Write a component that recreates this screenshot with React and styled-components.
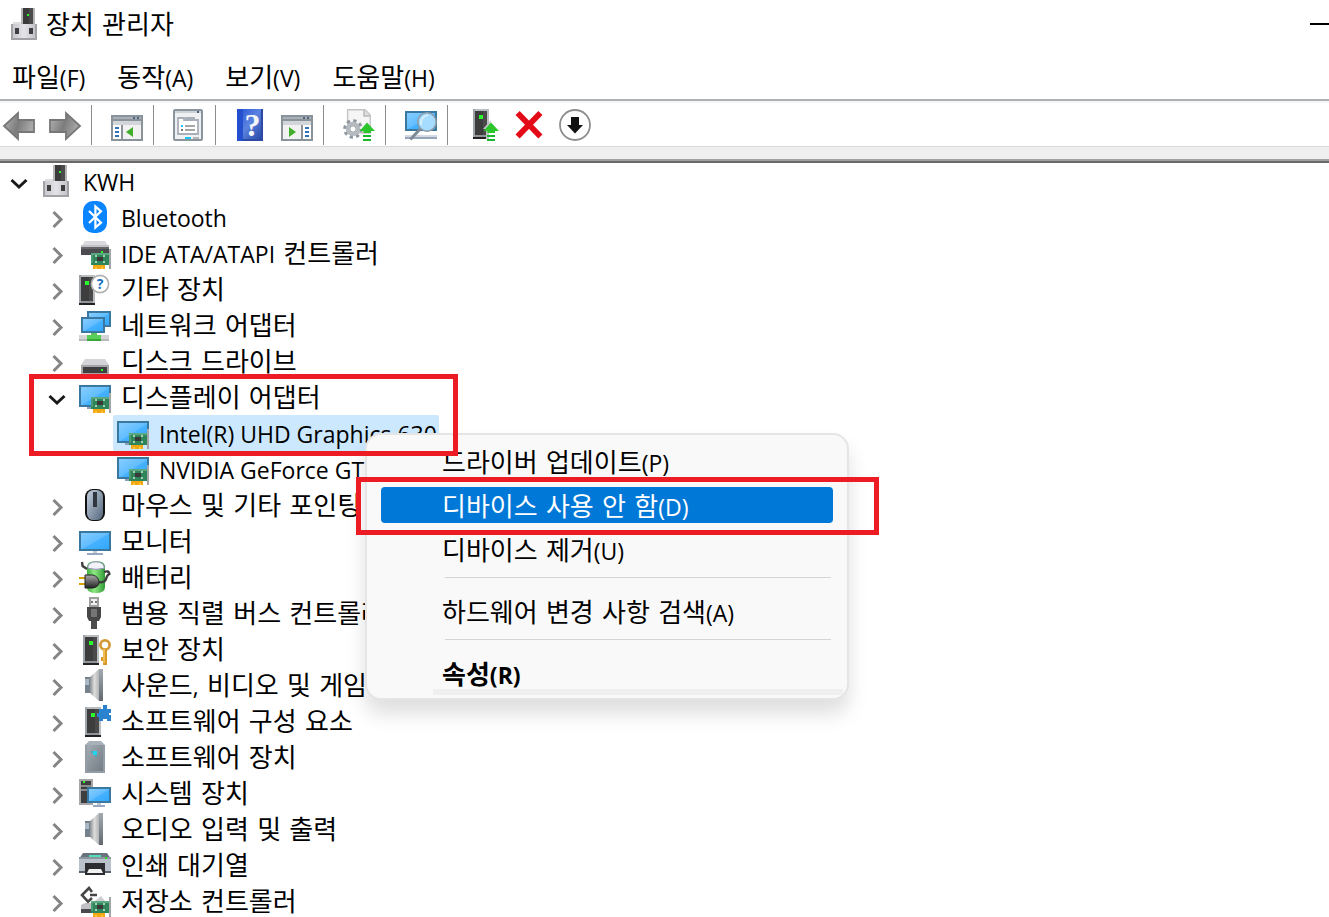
import React from "react";
import styled, { createGlobalStyle, css } from "styled-components";

const GlobalStyle = createGlobalStyle`
  * { box-sizing: border-box; }
  body {
    margin: 0;
    background: #fff;
    color: #000;
    font-family: "DejaVu Sans", "Noto Sans CJK KR", sans-serif;
    font-size: 26px;
    line-height: 36px;
  }
  button { font: inherit; color: inherit; background: none; border: 0; padding: 0; }
`;

/* ---------- window frame ---------- */

const Window = styled.div`
  display: flex;
  flex-direction: column;
  height: 100vh;
  overflow: hidden;
`;

const TitleBar = styled.header`
  display: flex;
  align-items: center;
  gap: 5px;
  height: 48px;
  padding-left: 9px;
  flex: none;
`;

const Title = styled.h1`
  margin: 0;
  padding-top: 2px;
  font-size: inherit;
  font-weight: 400;
  flex: 1;
`;

const Minimize = styled.button`
  width: 19px;
  height: 32px;
  display: flex;
  align-items: center;
  &::before {
    content: "";
    width: 100%;
    height: 2px;
    background: #000;
  }
`;

const MenuBar = styled.nav`
  display: flex;
  gap: 32px;
  height: 51px;
  padding: 9px 12px 0;
  align-items: center;
  flex: none;
  white-space: nowrap;
`;

const Latin = styled.span`
  font-family: "Open Sans", sans-serif;
  font-size: 23px;
`;

const ToolBar = styled.div`
  display: flex;
  align-items: flex-start;
  height: 48px;
  flex: none;
  border-top: 2px solid #b0b0b0;
  border-bottom: 1px solid #d9d9d9;
  box-shadow: inset 0 2px #f3f7fa;
  padding-top: 4px;
`;

const ToolGroup = styled.div`
  display: flex;
  align-items: center;
  gap: 14px;
  height: 40px;
  padding: 0 10px 0 ${(p) => (p.$first ? "3px" : "19px")};
  border-right: ${(p) => (p.$last ? "0" : "1px solid #8c8c8c")};
`;

const ToolButton = styled.button`
  display: flex;
  width: 32px;
  height: 32px;
`;

const Band = styled.div`
  height: 16px;
  flex: none;
  background: #efefef;
  border-bottom: 2px solid #696969;
  box-shadow: inset 0 -2px #a0a0a0;
`;

const Svg = styled.svg`
  width: 32px;
  height: 32px;
  flex: none;
  display: block;
  overflow: visible;
`;

/* ---------- tree ---------- */

const Content = styled.main`
  position: relative;
  flex: 1;
  min-height: 0;
`;

const Tree = styled.ul`
  list-style: none;
  margin: 0;
  padding: 0;
`;

const Row = styled.li`
  display: flex;
  align-items: center;
  height: 36px;
  padding-left: ${(p) => 3 + p.$level * 38}px;
`;

const Toggle = styled.button`
  width: 32px;
  height: 32px;
  margin-right: 2px;
  padding-top: 3px;
  display: flex;
  align-items: center;
  justify-content: center;
  color: ${(p) => (p.$open ? "#1a1a1a" : "#858585")};
`;

const ToggleSpace = styled.span`
  width: 34px;
`;

const Node = styled.span`
  display: flex;
  align-items: center;
  gap: 10px;
  height: 36px;
  padding: 0 2px 0 4px;
  border-radius: 2px;
  white-space: nowrap;
  background: ${(p) => (p.$selected ? "#cce8ff" : "transparent")};
`;

const Label = styled.span`
  padding-top: 2px;
`;

/* ---------- context menu ---------- */

const ContextMenu = styled.div`
  position: absolute;
  left: 365px;
  top: 270px;
  width: 484px;
  display: flex;
  flex-direction: column;
  gap: 8px;
  padding: 8px 14px 7px;
  border: 2px solid #e5e5e5;
  border-radius: 16px;
  background: #f9f9f9;
  box-shadow: 0 14px 20px rgba(0, 0, 0, 0.13);
  &::after {
    content: "";
    position: absolute;
    left: 66px;
    right: 4px;
    bottom: 3px;
    height: 6px;
    background: #efefef;
  }
`;

const MenuItem = styled.button`
  height: 36px;
  padding: 2px 0 0 61px;
  text-align: left;
  border-radius: 4px;
  font-weight: ${(p) => (p.$bold ? 700 : 400)};
  ${(p) =>
    p.$active &&
    css`
      background: #0078d7;
      color: #fff;
    `}
`;

const Divider = styled.hr`
  width: 386px;
  height: 1px;
  margin: 2px 2px 7px auto;
  border: 0;
  background: #d5d5d5;
`;

const Marker = styled.div`
  position: absolute;
  left: ${(p) => p.$x}px;
  top: ${(p) => p.$y}px;
  width: ${(p) => p.$w}px;
  height: ${(p) => p.$h}px;
  border: 5px solid #ed1c24;
  pointer-events: none;
`;

/* ---------- icons, drawn on a 16-unit grid ---------- */

const R = ({ x, y, w, h, f, ...rest }) => (
  <rect x={x} y={y} width={w} height={h} fill={f} {...rest} />
);

const Icon = ({ children }) => (
  <Svg viewBox="0 0 16 16" aria-hidden="true">
    {children}
  </Svg>
);

const Defs = styled.svg`
  position: absolute;
  width: 0;
  height: 0;
`;

const Gradients = () => (
  <Defs aria-hidden="true">
    <defs>
      <linearGradient id="screen" x1="0" y1="0" x2="1" y2="1">
        <stop offset="0" stopColor="#86cdff" />
        <stop offset="0.5" stopColor="#62bdff" />
        <stop offset="0.55" stopColor="#45b1ff" />
        <stop offset="1" stopColor="#33a8ff" />
      </linearGradient>
      <linearGradient id="metal" x1="0" y1="0" x2="1" y2="0">
        <stop offset="0" stopColor="#c9c9cd" />
        <stop offset="0.5" stopColor="#e4e4e8" />
        <stop offset="1" stopColor="#c4c4c8" />
      </linearGradient>
      <linearGradient id="cone" x1="0" y1="0" x2="1" y2="0">
        <stop offset="0" stopColor="#8b8f93" />
        <stop offset="0.5" stopColor="#dcdcdc" />
        <stop offset="1" stopColor="#b2b4b6" />
      </linearGradient>
      <linearGradient id="edge" x1="0" y1="0" x2="0" y2="1">
        <stop offset="0" stopColor="#a3abb2" />
        <stop offset="1" stopColor="#62686e" />
      </linearGradient>
      <linearGradient id="arrow" x1="0" y1="0" x2="1" y2="0.3">
        <stop offset="0" stopColor="#b5b5b5" />
        <stop offset="0.55" stopColor="#7c7c7c" />
        <stop offset="1" stopColor="#a9a9a9" />
      </linearGradient>
      <linearGradient id="mouse" x1="0" y1="0" x2="1" y2="1">
        <stop offset="0" stopColor="#c3d0de" />
        <stop offset="1" stopColor="#55677d" />
      </linearGradient>
      <linearGradient id="help" x1="0" y1="0" x2="1" y2="1">
        <stop offset="0" stopColor="#2351d6" />
        <stop offset="0.5" stopColor="#5b83e0" />
        <stop offset="1" stopColor="#2a49a8" />
      </linearGradient>
      <linearGradient id="case" x1="0" y1="0" x2="1" y2="1">
        <stop offset="0" stopColor="#a3abb3" />
        <stop offset="1" stopColor="#737c84" />
      </linearGradient>
      <linearGradient id="plug" x1="0" y1="0" x2="0" y2="1">
        <stop offset="0" stopColor="#aaa" />
        <stop offset="1" stopColor="#222" />
      </linearGradient>
      <linearGradient id="cell" x1="0" y1="0" x2="1" y2="0">
        <stop offset="0" stopColor="#3fae3f" />
        <stop offset="0.4" stopColor="#8ee882" />
        <stop offset="1" stopColor="#2f9a35" />
      </linearGradient>
    </defs>
  </Defs>
);

const Screen = ({ x, y, w, h }) => (
  <g>
    <R x={x} y={y} w={w} h={h} f="#3b789f" />
    <R x={x + 1} y={y + 1} w={w - 2} h={h - 2} f="url(#screen)" />
  </g>
);

const Card = () => (
  <g>
    <R x={15} y={6} w={1} h={10} f="#a5a5a8" />
    <R x={6} y={8} w={9} h={6} f="#2f855a" />
    <R x={6} y={8} w={9} h={1} f="#5aa880" />
    <R x={6} y={9} w={1} h={4} f="#4c9a72" />
    <R x={9} y={10} w={3} h={2} f="#3a3a3a" />
    <R x={8} y={9} w={1} h={1} f="#a9cdb8" />
    <R x={12} y={9} w={1} h={1} f="#a9cdb8" />
    <R x={8} y={12} w={1} h={1} f="#a9cdb8" />
    <R x={12} y={12} w={1} h={1} f="#a9cdb8" />
    <R x={7} y={14} w={6} h={2} f="#f3a712" />
    <R x={8} y={15} w={1} h={1} f="#ffc33c" />
    <R x={11} y={15} w={1} h={1} f="#ffc33c" />
  </g>
);

const Tower = ({ x = 0, y = 0 }) => (
  <g transform={`translate(${x} ${y})`}>
    <R x={0} y={0} w={8} h={14} f="#b9bdc0" />
    <R x={0} y={0} w={1} h={14} f="#9da3a8" />
    <R x={1} y={1} w={6} h={12} f="#3d3d3d" />
    <R x={5} y={1} w={2} h={12} f="#4a4a4a" />
    <R x={3} y={3} w={2} h={2} f="#2bff2b" />
    <R x={0} y={14} w={8} h={1} f="#222" />
    <R x={1} y={13} w={6} h={1} f="#909498" />
  </g>
);

const UpArrow = () => (
  <g>
    <path d="M12 6.800 16 11H14V12H10.200V11H8.300Z" fill="#2cc52c" />
    <R x={10} y={13} w={4} h={1} f="#17b82b" />
    <R x={10} y={15} w={4} h={1} f="#17b82b" />
  </g>
);

const Hub = () => (
  <Icon>
    <R x={6} y={0} w={7} h={8} f="#b4b6b8" />
    <R x={7} y={0} w={5} h={8} f="#3b3b3b" />
    <R x={10} y={0} w={2} h={8} f="#4b4b4b" />
    <R x={9} y={3} w={1} h={1} f="#2bff2b" />
    <R x={2} y={7} w={4} h={1} f="#dedee0" />
    <R x={1} y={8} w={13} h={8} f="#a2a2a6" />
    <R x={2} y={8} w={11} h={7} f="url(#metal)" />
    <R x={3} y={10} w={2} h={3} f="#3f3f3f" />
    <R x={10} y={10} w={2} h={3} f="#3f3f3f" />
  </Icon>
);

const Bluetooth = () => (
  <Icon>
    <rect x="2" width="12" height="16" rx="5" fill="#0a84ff" />
    <path d="M5 5 11 10.800 8.200 13.300V2.700L11 5.200 5 11" fill="none" stroke="#fff" strokeWidth="1.100" />
  </Icon>
);

const Ide = () => (
  <Icon>
    <path d="M3 2H13L15 5H1Z" fill="#d9d9de" />
    <R x={1} y={4} w={14} h={5} f="#c2c2c7" />
    <R x={1} y={5} w={14} h={4} f="#4c4c50" />
    <R x={1} y={5} w={14} h={1} f="#66666a" />
    <Card />
    <R x={11} y={7} w={1} h={1} f="#2bff2b" />
  </Icon>
);

const Unknown = () => (
  <Icon>
    <Tower x={0} y={1} />
    <circle cx="10.500" cy="5.500" r="4.300" fill="#fff" stroke="#b0b0b0" strokeWidth="0.800" />
    <text x="10.500" y="8" textAnchor="middle" fontFamily="Open Sans" fontSize="7" fontWeight="700" fill="#1a6fc0">?</text>
  </Icon>
);

const Network = () => (
  <Icon>
    <Screen x={4} y={1} w={12} h={8} />
    <Screen x={1} y={4} w={12} h={8} />
    <R x={0} y={13} w={15} h={2} f="#d3d5d6" />
    <R x={0} y={15} w={15} h={1} f="#b6babc" />
    <R x={6} y={12} w={3} h={1} f="#5fc45f" />
    <R x={4} y={13} w={7} h={2} f="#58cf58" />
    <R x={4} y={15} w={7} h={1} f="#35a835" />
  </Icon>
);

const Disk = () => (
  <Icon>
    <path d="M3 7H13L15 10V11H1V10Z" fill="#d4d4d8" />
    <R x={1} y={10} w={14} h={5} f="#a5a5a8" />
    <R x={2} y={11} w={12} h={3} f="#3f3f41" />
    <R x={11} y={12} w={1} h={1} f="#2bff2b" />
  </Icon>
);

const Display = () => (
  <Icon>
    <Screen x={0} y={2} w={16} h={11} />
    <R x={4} y={13} w={2} h={1} f="#8c9fb8" />
    <Card />
  </Icon>
);

const Mouse = () => (
  <Icon>
    <rect x="3" y="0" width="10" height="16" rx="4" fill="#111" />
    <rect x="4" y="0.500" width="8" height="15" rx="3.200" fill="url(#mouse)" />
    <path d="M7 1.500H9V9H7Z" fill="#30363e" />
  </Icon>
);

const Monitor = () => (
  <Icon>
    <Screen x={0} y={3} w={16} h={10} />
    <R x={7} y={13} w={2} h={1} f="#c3cad4" />
    <R x={4} y={14} w={8} h={1} f="#98a8c0" />
  </Icon>
);

const Battery = () => (
  <Icon>
    <path d="M4 3Q4 0 8.500 0T13 3V13Q13 16 8.500 16T4 13Z" fill="url(#cell)" />
    <path d="M4.300 3.600Q4.500 0.400 8.500 0.400T12.700 3.600Q8.500 4.800 4.300 3.600Z" fill="#f2f2fa" stroke="#8f8fae" strokeWidth="0.500" />
    <path d="M10 10.500Q13 11 13.500 9T15.200 6.500Q15 4.500 12.500 5.500M1.500 0.500 1.800 2.500 4 4" fill="none" stroke="#3e3e3e" strokeWidth="1.200" />
    <R x={0} y={8} w={3} h={1} f="#d6a400" />
    <R x={0} y={11} w={3} h={1} f="#d6a400" />
    <path d="M3 7H7Q10 8 10 10.500T7 13.500H3Z" fill="url(#plug)" stroke="#222" strokeWidth="0.500" />
  </Icon>
);

const Usb = () => (
  <Icon>
    <R x={5} y={0} w={5} h={5} f="#a0a0a0" />
    <R x={6} y={1} w={3} h={3} f="#f0f0f0" />
    <R x={6} y={2} w={1} h={1} f="#777" />
    <R x={8} y={2} w={1} h={1} f="#777" />
    <path d="M4 5H11V10L10 12H5L4 10Z" fill="#474747" />
    <R x={6} y={6} w={3} h={4} f="#757575" />
    <R x={6} y={12} w={3} h={4} f="#4b4b4b" />
  </Icon>
);

const Security = () => (
  <Icon>
    <Tower x={2} y={1} />
    <circle cx="13" cy="6" r="2.300" fill="#fff" stroke="#d39a35" strokeWidth="1.400" />
    <R x={12} y={8} w={2} h={8} f="#d99a2b" />
    <R x={12} y={8} w={1} h={7} f="#efbd55" />
    <R x={11} y={12} w={1} h={2} f="#d99a2b" />
  </Icon>
);

const Speaker = () => (
  <Icon>
    <R x={3} y={4} w={3} h={8} f="#75828e" />
    <R x={3} y={5} w={2} h={3} f="#a9b9c6" />
    <path d="M5.500 4 10 0V16L5.500 12Z" fill="url(#cone)" />
    <R x={10} y={0} w={2} h={16} f="url(#edge)" />
  </Icon>
);

const Software = () => (
  <Icon>
    <Tower x={3} y={1} />
    <path d="M10 2H12V0H14V2H16V4H15V5H16V8H14V7H12V8H10V6H9V4H10Z" fill="#2b83cf" />
  </Icon>
);

const SoftDevice = () => (
  <Icon>
    <path d="M5 0H11L13 2V16H3V2Z" fill="#a9b1b8" />
    <R x={3} y={2} w={10} h={14} f="#949da5" />
    <R x={4} y={2} w={8} h={13} f="url(#case)" />
    <R x={7} y={5} w={2} h={2} f="#20d3f0" />
    <R x={6} y={5} w={1} h={1} f="#4fa5b5" />
    <R x={8} y={7} w={1} h={1} f="#4fa5b5" />
  </Icon>
);

const SystemIcon = () => (
  <Icon>
    <R x={0} y={1} w={7} h={13} f="#a6a6a6" />
    <R x={1} y={2} w={5} h={11} f="#3e3e3e" />
    <R x={2} y={2} w={1} h={1} f="#2bff2b" />
    <R x={1} y={4} w={5} h={1} f="#8b8b8b" />
    <R x={1} y={6} w={4} h={1} f="#8b8b8b" />
    <Screen x={4} y={5} w={12} h={8} />
    <R x={9} y={13} w={2} h={1} f="#c3cad4" />
    <R x={7} y={14} w={6} h={1} f="#98a8c0" />
  </Icon>
);

const Printer = () => (
  <Icon>
    <path d="M2 2H14L16 5H0Z" fill="#68737d" />
    <R x={5} y={3} w={6} h={1} f="#4fe0b8" />
    <path d="M0 5H16V12H0Z" fill="#b9c1ca" />
    <R x={0} y={4} w={16} h={1} f="#8c969f" />
    <R x={13} y={4} w={1} h={1} f="#2bdf2b" />
    <R x={0} y={11} w={16} h={1} f="#58616b" />
    <path d="M3 7H13V13H3Z" fill="#2b2d30" />
    <path d="M5 10H11L12 12H4Z" fill="#f1f1f1" />
  </Icon>
);

const Storage = () => (
  <Icon>
    <path d="M1 10 3 9H7V14H1Z" fill="#c1c1c5" />
    <R x={1} y={12} w={5} h={2} f="#4a4a4d" />
    <path d="M8 8 11 5.500 13 8Z" fill="#cfcfd2" />
    <path d="M6.500 3.500 5 1.500 1.500 5 4.500 8.300 6.500 6.500M9 5H5.500" fill="none" stroke="#454545" strokeWidth="1.300" />
    <Card />
  </Icon>
);

const Back = () => (
  <Icon>
    <path d="M0.500 8.500 7.500 2V5.500H15.500V11.500H7.500V15Z" fill="url(#arrow)" stroke="#777" strokeWidth="0.900" />
  </Icon>
);

const Forward = () => (
  <Icon>
    <path d="M15.500 8.500 8.500 2V5.500H0.500V11.500H8.500V15Z" fill="url(#arrow)" stroke="#777" strokeWidth="0.900" />
  </Icon>
);

const Pane = ({ right }) => (
  <Icon>
    <R x={0} y={3} w={16} h={13} f="#8b939a" />
    <R x={1} y={4} w={14} h={1} f="#a9b0b7" />
    <R x={11} y={4} w={1} h={1} f="#4d6480" />
    <R x={13} y={4} w={1} h={1} f="#4d6480" />
    <R x={1} y={6} w={14} h={2} f="#d2d6da" />
    <R x={right ? 1 : 6} y={8} w={9} h={7} f="#f2f2f2" />
    <R x={right ? 11 : 1} y={8} w={4} h={7} f="#fff" />
    {[9, 11, 13].map((y) => (
      <R key={y} x={right ? 12 : 2} y={y} w={2} h={1} f="#2f74b8" />
    ))}
    <path d={right ? "M4 9V14L7.500 11.500Z" : "M11 9V14L7.500 11.500Z"} fill="#3fae2a" />
  </Icon>
);

const Properties = () => (
  <Icon>
    <rect x="0.500" y="0.500" width="14" height="15" rx="0.500" fill="#eef0f1" stroke="#8b959d" />
    <R x={1} y={1} w={13} h={1} f="#cdd2d6" />
    <R x={12} y={1} w={1} h={1} f="#4d6480" />
    <path d="M2.500 4.500H5.500V5.500H12.500V12.500H2.500ZM6.500 5.500V4.500H10.500V5.500" fill="#fff" stroke="#a9afba" strokeWidth="0.900" />
    <R x={4} y={8} w={1} h={1} f="#18c5f5" />
    <R x={6} y={8} w={5} h={1} f="#a6a6a6" />
    <R x={4} y={10} w={1} h={1} f="#777" />
    <R x={6} y={10} w={5} h={1} f="#a6a6a6" />
    <R x={6} y={14} w={3} h={1} f="#18c5f5" />
    <R x={10} y={14} w={3} h={1} f="#b5b5b5" />
  </Icon>
);

const Help = () => (
  <Icon>
    <R x={1} y={0} w={13} h={16} f="#2c49a5" />
    <R x={1} y={0} w={12} h={15} f="url(#help)" />
    <R x={1} y={0} w={3} h={16} f="#2450cf" />
    <text x="8.700" y="13.500" textAnchor="middle" fontFamily="Liberation Serif" fontSize="16" fontWeight="700" fill="#f5f6fb">?</text>
  </Icon>
);

const DriverUpdate = () => (
  <Icon>
    <path d="M2.300 0.400H11L13.600 3V12H2.300Z" fill="#f5f5f5" stroke="#c4c4c4" strokeWidth="0.700" />
    <path d="M10.500 0.400V3.500H13.600" fill="#ddd" stroke="#b8b8b8" strokeWidth="0.700" />
    <circle cx="5" cy="10" r="4" fill="none" stroke="#8f979e" strokeWidth="1.800" strokeDasharray="1.600 1.540" />
    <circle cx="5" cy="10" r="2.700" fill="#fff" stroke="#b4bac0" strokeWidth="1.800" />
    <circle cx="5" cy="10" r="1.600" fill="#fff" stroke="#8f979e" strokeWidth="0.500" />
    <UpArrow />
  </Icon>
);

const Scan = () => (
  <Icon>
    <Screen x={0} y={1} w={16} h={10} />
    <R x={0} y={13} w={16} h={1} f="#d5dae2" />
    <R x={0} y={14} w={16} h={1} f="#96a5ba" />
    <path d="M7.800 9.800 2.700 15.300" stroke="#7d8a96" strokeWidth="1.500" />
    <circle cx="11" cy="6.500" r="4.600" fill="#a6dcff" stroke="#8b9aa6" strokeWidth="0.800" />
    <path d="M8 8Q7.500 4 11.500 3" fill="none" stroke="#d7f0ff" strokeWidth="0.900" />
  </Icon>
);

const Enable = () => (
  <Icon>
    <Tower x={3} y={0} />
    <path d="M12 5.500 8 10H9.500V15H11V10Z" fill="#bfc3c6" />
    <UpArrow />
  </Icon>
);

const Uninstall = () => (
  <Icon>
    <path d="M2.300 2 13.700 13.800M13.700 2 2.300 13.800" stroke="#e30b17" strokeWidth="2.900" />
  </Icon>
);

const Disable = () => (
  <Icon>
    <circle cx="8" cy="8" r="7.500" fill="#fff" stroke="#8e8e8e" strokeWidth="0.900" />
    <path d="M6 4H10V8H12L8 12.300 4 8H6Z" fill="#111" />
  </Icon>
);

const Chevron = ({ open }) => (
  <svg width="18" height="18" viewBox="0 0 18 18" fill="none" stroke="currentColor" strokeWidth="3" aria-hidden="true">
    <path d={open ? "M1.500 6 9 13 16.500 6" : "M5.500 2 13 9.500 5.500 17"} />
  </svg>
);

/* ---------- data ---------- */

const tools = [
  [["뒤로", Back], ["앞으로", Forward]],
  [["콘솔 트리 표시/숨기기", Pane]],
  [["속성", Properties]],
  [["도움말", Help], ["작업 창 표시/숨기기", () => <Pane right />]],
  [["드라이버 업데이트", DriverUpdate]],
  [["하드웨어 변경 사항 검색", Scan]],
  [["디바이스 사용", Enable], ["디바이스 제거", Uninstall], ["디바이스 사용 안 함", Disable]],
];

const menus = [["파일", "F"], ["동작", "A"], ["보기", "V"], ["도움말", "H"]];

const devices = [
  { level: 0, open: true, icon: Hub, text: "KWH" },
  { level: 1, icon: Bluetooth, text: "Bluetooth" },
  { level: 1, icon: Ide, text: "IDE ATA/ATAPI 컨트롤러" },
  { level: 1, icon: Unknown, text: "기타 장치" },
  { level: 1, icon: Network, text: "네트워크 어댑터" },
  { level: 1, icon: Disk, text: "디스크 드라이브" },
  { level: 1, open: true, icon: Display, text: "디스플레이 어댑터" },
  { level: 2, leaf: true, selected: true, icon: Display, text: "Intel(R) UHD Graphics 630" },
  { level: 2, leaf: true, icon: Display, text: "NVIDIA GeForce GT" },
  { level: 1, icon: Mouse, text: "마우스 및 기타 포인팅" },
  { level: 1, icon: Monitor, text: "모니터" },
  { level: 1, icon: Battery, text: "배터리" },
  { level: 1, icon: Usb, text: "범용 직렬 버스 컨트롤러" },
  { level: 1, icon: Security, text: "보안 장치" },
  { level: 1, icon: Speaker, text: "사운드, 비디오 및 게임" },
  { level: 1, icon: Software, text: "소프트웨어 구성 요소" },
  { level: 1, icon: SoftDevice, text: "소프트웨어 장치" },
  { level: 1, icon: SystemIcon, text: "시스템 장치" },
  { level: 1, icon: Speaker, text: "오디오 입력 및 출력" },
  { level: 1, icon: Printer, text: "인쇄 대기열" },
  { level: 1, icon: Storage, text: "저장소 컨트롤러" },
];

/* Latin letters and punctuation take the smaller Latin face, Hangul the base one. */
const Mixed = ({ children }) =>
  children
    .split(/([!-~](?:[ -~]*[!-~])?)/)
    .map((run, i) => (i % 2 ? <Latin key={i}>{run}</Latin> : run));

const Device = ({ level, open, leaf, selected, icon: DeviceIcon, text }) => (
  <Row $level={level} role="treeitem" aria-level={level + 1} aria-selected={!!selected}>
    {leaf ? (
      <ToggleSpace />
    ) : (
      <Toggle $open={open} aria-expanded={!!open} aria-label={text}>
        <Chevron open={open} />
      </Toggle>
    )}
    <Node $selected={selected}>
      <DeviceIcon />
      <Label>
        <Mixed>{text}</Mixed>
      </Label>
    </Node>
  </Row>
);

const Command = ({ text, ...rest }) => (
  <MenuItem role="menuitem" {...rest}>
    <Mixed>{text}</Mixed>
  </MenuItem>
);

export default function App() {
  return (
    <Window>
      <GlobalStyle />
      <Gradients />
      <TitleBar>
        <Hub />
        <Title>장치 관리자</Title>
        <Minimize aria-label="최소화" />
      </TitleBar>
      <MenuBar>
        {menus.map(([text, letter]) => (
          <button key={letter}>
            <Mixed>{`${text}(${letter})`}</Mixed>
          </button>
        ))}
      </MenuBar>
      <ToolBar role="toolbar">
        {tools.map((group, i) => (
          <ToolGroup key={i} $first={i === 0} $last={i === tools.length - 1}>
            {group.map(([name, ToolIcon]) => (
              <ToolButton key={name} aria-label={name}>
                <ToolIcon />
              </ToolButton>
            ))}
          </ToolGroup>
        ))}
      </ToolBar>
      <Band />
      <Content>
        <Tree role="tree">
          {devices.map((device, i) => (
            <Device key={i} {...device} />
          ))}
        </Tree>
        <ContextMenu role="menu">
          <Command text="드라이버 업데이트(P)" />
          <Command text="디바이스 사용 안 함(D)" $active />
          <Command text="디바이스 제거(U)" />
          <Divider />
          <Command text="하드웨어 변경 사항 검색(A)" />
          <Divider />
          <Command text="속성(R)" $bold />
        </ContextMenu>
        <Marker $x={29} $y={211} $w={429} $h={82} />
        <Marker $x={356} $y={314} $w={523} $h={58} />
      </Content>
    </Window>
  );
}
